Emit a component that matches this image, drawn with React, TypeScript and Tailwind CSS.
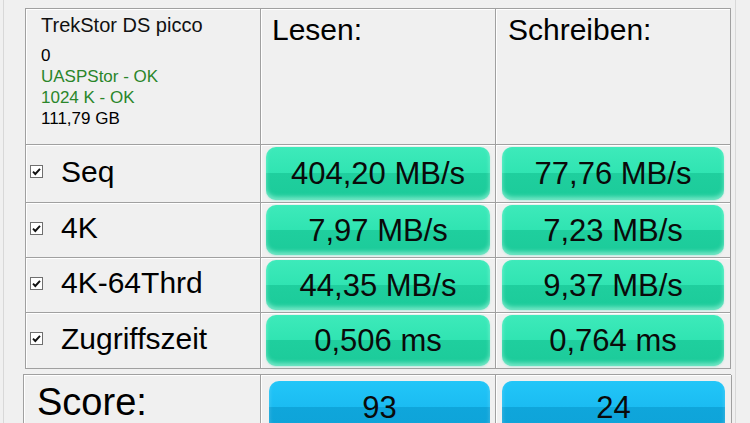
import React from 'react';

const rows = [
  { label: 'Seq', read: '404,20 MB/s', write: '77,76 MB/s', h: 'h-[58px]' },
  { label: '4K', read: '7,97 MB/s', write: '7,23 MB/s', h: 'h-[55px]' },
  { label: '4K-64Thrd', read: '44,35 MB/s', write: '9,37 MB/s', h: 'h-[55px]' },
  { label: 'Zugriffszeit', read: '0,506 ms', write: '0,764 ms', h: 'h-[56px]' },
];

function CheckBox() {
  return (
    <svg width="13" height="13" viewBox="0 0 13 13" className="shrink-0">
      <rect x="0.5" y="0.5" width="12" height="12" fill="#fff" stroke="#6f6f6f" />
      <path d="M3 6.6 L5.3 9 L10 3.8" fill="none" stroke="#111" strokeWidth="1.9" />
    </svg>
  );
}

function ResultButton({ value, score }: { value: string; score?: boolean }) {
  const look = score
    ? 'bg-[linear-gradient(to_bottom,#22c6f8_0%,#1bbcf2_50%,#0fa6db_50%,#0ea3d8_100%)] shadow-[inset_0_-3px_4px_rgba(255,255,255,0.25)]'
    : 'bg-[linear-gradient(to_bottom,#3deaba_0%,#30e4b2_50%,#1fcf9e_50%,#1ccb9a_100%)] shadow-[inset_0_-3px_4px_rgba(190,255,235,0.55),0_1px_2px_rgba(150,230,210,0.6)]';
  return (
    <div className={`flex-1 rounded-[10px] flex items-center justify-center text-[31px] leading-none text-[#0a0a0a] ${look}`}>
      {value}
    </div>
  );
}

export default function App() {
  const cell = 'border-r border-b border-[#a0a0a0] shadow-[inset_1px_1px_0_#ffffff]';

  return (
    <div className="w-[750px] h-[423px] overflow-hidden bg-[#f0f0f0] pl-[3px] font-['Liberation_Sans',Arial,sans-serif] text-black">
      <div className="w-[733px] h-full border-l border-r border-[#d8d8d8] pl-[21px] pt-[8px]">
        {/* Ergebnis-Tabelle */}
        <div className="w-[706px] border-l border-t border-[#a0a0a0] grid grid-cols-[235px_235px_235px]">
          <div className={`${cell} h-[136px] pl-[15px] pt-[4px]`}>
            <div className="text-[20px] leading-[24px] text-[#111]">TrekStor DS picco</div>
            <div className="mt-[8px] text-[17px] leading-[21px]">
              <div>0</div>
              <div className="text-[#2a862a]">UASPStor - OK</div>
              <div className="text-[#2a862a]">1024 K - OK</div>
              <div>111,79 GB</div>
            </div>
          </div>
          <div className={`${cell} h-[136px] pl-[11px] pt-[6px] text-[30px] leading-none`}>Lesen:</div>
          <div className={`${cell} h-[136px] pl-[12px] pt-[6px] text-[30px] leading-none`}>Schreiben:</div>

          {rows.map((r) => (
            <React.Fragment key={r.label}>
              <div className={`${cell} ${r.h} flex items-center pl-[4px] pb-[4px] gap-[18px] text-[30px] leading-none`}>
                <CheckBox />
                <span>{r.label}</span>
              </div>
              <div className={`${cell} ${r.h} flex px-[5px] py-[2px]`}>
                <ResultButton value={r.read} />
              </div>
              <div className={`${cell} ${r.h} flex px-[6px] py-[2px]`}>
                <ResultButton value={r.write} />
              </div>
            </React.Fragment>
          ))}
        </div>

        {/* Score */}
        <div className="mt-[5px] ml-[-2px] w-[708px] h-[60px] border-l border-t border-[#a0a0a0] grid grid-cols-[237px_235px_236px]">
          <div className={`${cell} pl-[13px] pt-[8px] text-[38px] leading-none`}>Score:</div>
          <div className={`${cell} flex pl-[8px] pr-[5px] pt-[6px]`}>
            <ResultButton value="93" score />
          </div>
          <div className={`${cell} flex pl-[6px] pr-[6px] pt-[6px]`}>
            <ResultButton value="24" score />
          </div>
        </div>
      </div>
    </div>
  );
}
